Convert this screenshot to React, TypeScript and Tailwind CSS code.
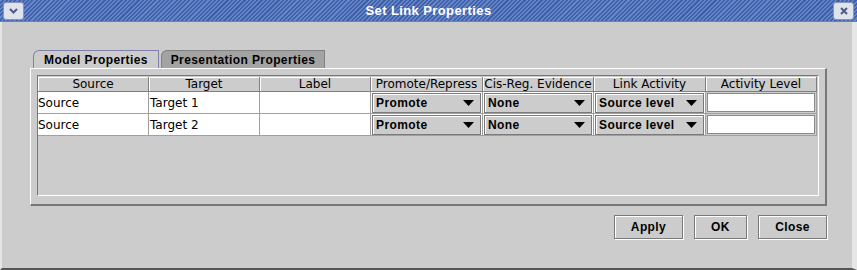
import React from 'react';

const cols = ['Source', 'Target', 'Label', 'Promote/Repress', 'Cis-Reg. Evidence', 'Link Activity', 'Activity Level'];

const rows = [
  { source: 'Source', target: 'Target 1' },
  { source: 'Source', target: 'Target 2' },
];

const bold = "font-['Liberation_Sans',sans-serif] font-bold tracking-[0.4px] whitespace-nowrap";

function Combo({ value }: { value: string }) {
  return (
    <div className={`m-px flex h-[20px] items-center justify-between border border-[#7a7a7a] bg-[#cccccc] pl-[3px] pr-[6px] text-[12px] text-black shadow-[inset_1px_1px_0_#ffffff] ${bold}`}>
      <span>{value}</span>
      <svg width="11" height="6" viewBox="0 0 11 6">
        <polygon points="0,0 11,0 5.5,6" fill="#000" />
      </svg>
    </div>
  );
}

function Button({ label, w }: { label: string; w: string }) {
  return (
    <button className={`${w} h-[24px] border border-[#7a7a7a] bg-[#cccccc] text-[12px] text-black shadow-[inset_1px_1px_0_#ffffff,1px_1px_0_#ffffff] ${bold}`}>
      {label}
    </button>
  );
}

export default function App() {
  return (
    <div className="flex h-[270px] w-[857px] flex-col bg-[#cccccc] font-['DejaVu_Sans',sans-serif] text-black">
      {/* title bar */}
      <div className="relative flex h-[22px] items-center justify-between border-b border-[#6b7fb0] bg-[repeating-linear-gradient(135deg,#6585c9_0px,#6585c9_1.5px,#3f5fa9_1.5px,#3f5fa9_3px)] px-[3px]">
        <div className="flex h-[18px] w-[21px] items-center justify-center rounded-[3px] border border-[#8a93b0] bg-[#dfe3ee]">
          <svg width="9" height="6" viewBox="0 0 9 6">
            <polyline points="1,1 4.5,4.5 8,1" fill="none" stroke="#505a80" strokeWidth="2" />
          </svg>
        </div>
        <span className={`absolute left-1/2 -translate-x-1/2 text-[13px] text-white ${bold}`}>Set Link Properties</span>
        <div className="flex h-[18px] w-[21px] items-center justify-center rounded-[3px] border border-[#8a93b0] bg-[#dfe3ee]">
          <svg width="8" height="8" viewBox="0 0 8 8">
            <path d="M1 1 L7 7 M7 1 L1 7" stroke="#505a80" strokeWidth="2" />
          </svg>
        </div>
      </div>

      {/* body */}
      <div className="flex flex-1 flex-col border-b-2 border-l-2 border-r-[5px] border-b-[#555] border-l-[#e6e6e6] border-r-[#e6e6e6] pl-[28px] pr-[26px] pt-[28px]">
        {/* tabs */}
        <div className="flex h-[18px] items-end pl-[3px]">
          <div className={`flex h-[18px] w-[126px] items-center justify-center rounded-tl-[6px] border border-b-0 border-[#8080a8] bg-[#cccccc] text-[12px] ${bold}`}>
            Model Properties
          </div>
          <div className={`ml-[2px] flex h-[18px] w-[164px] items-center justify-center rounded-tl-[6px] border border-b-0 border-[#808080] bg-[#a3a3a3] text-[12px] ${bold}`}>
            Presentation Properties
          </div>
        </div>

        {/* tab panel */}
        <div className="h-[138px] w-[797px] border-b-2 border-l border-r-2 border-t border-b-[#777] border-l-white border-r-[#777] border-t-white p-[6px]">
          <div className="h-[121px] w-[782px] border-b border-l border-r border-t border-b-white border-l-[#777] border-r-white border-t-[#777] bg-[#cccccc] pt-px">
            <div className="grid grid-cols-[111px_111px_111px_112px_111px_112px_111px]">
              {cols.map((c) => (
                <div
                  key={c}
                  className="flex h-[15px] items-center justify-center whitespace-nowrap border-b border-r border-[#808080] bg-[#cccccc] text-[12px] leading-none shadow-[inset_1px_1px_0_#ffffff]"
                >
                  {c}
                </div>
              ))}
              {rows.map((r) => (
                <React.Fragment key={r.target}>
                  <div className="flex h-[22px] items-center border-b border-r border-[#a0a0a0] bg-white text-[12px]">{r.source}</div>
                  <div className="flex h-[22px] items-center border-b border-r border-[#a0a0a0] bg-white pl-px text-[12px]">{r.target}</div>
                  <div className="h-[22px] border-b border-r border-[#a0a0a0] bg-white" />
                  <div className="h-[22px] border-b border-r border-[#a0a0a0] bg-white">
                    <Combo value="Promote" />
                  </div>
                  <div className="h-[22px] border-b border-r border-[#a0a0a0] bg-white">
                    <Combo value="None" />
                  </div>
                  <div className="h-[22px] border-b border-r border-[#a0a0a0] bg-white">
                    <Combo value="Source level" />
                  </div>
                  <div className="h-[22px] border-b border-r border-[#a0a0a0] bg-[#cccccc] p-px">
                    <div className="h-full border border-[#8a8a8a] bg-white" />
                  </div>
                </React.Fragment>
              ))}
            </div>
          </div>
        </div>

        {/* buttons */}
        <div className="mt-[9px] flex w-[797px] justify-end gap-[11px]">
          <Button label="Apply" w="w-[69px]" />
          <Button label="OK" w="w-[53px]" />
          <Button label="Close" w="w-[69px]" />
        </div>
      </div>
    </div>
  );
}
